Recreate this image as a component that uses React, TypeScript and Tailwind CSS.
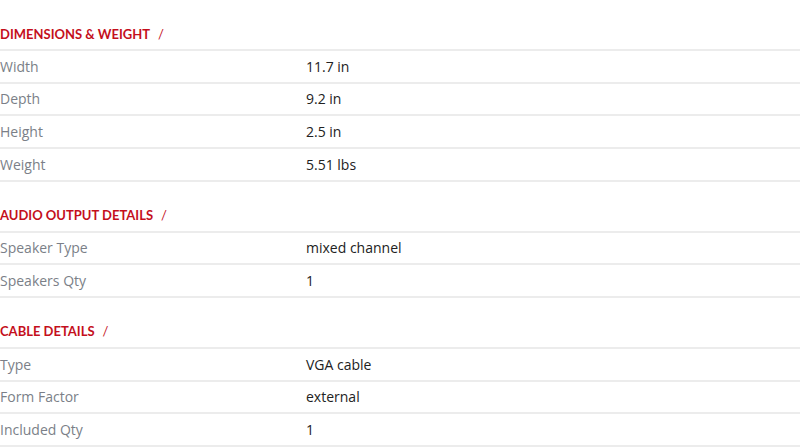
const sections = [
  {
    title: "DIMENSIONS & WEIGHT",
    rows: [
      ["Width", "11.7 in"],
      ["Depth", "9.2 in"],
      ["Height", "2.5 in"],
      ["Weight", "5.51 lbs"],
    ],
  },
  {
    title: "AUDIO OUTPUT DETAILS",
    rows: [
      ["Speaker Type", "mixed channel"],
      ["Speakers Qty", "1"],
    ],
  },
  {
    title: "CABLE DETAILS",
    rows: [
      ["Type", "VGA cable"],
      ["Form Factor", "external"],
      ["Included Qty", "1"],
    ],
  },
];

export default function App() {
  return (
    <div className="w-[800px] h-[448px] overflow-hidden bg-white font-['Open_Sans',sans-serif]">
      {sections.map((s) => (
        <section key={s.title}>
          <div className="flex items-end h-[51px] pb-[5px] border-b-2 border-[#ececec] text-[13px] font-bold text-[#c40f1c] font-['Lato',sans-serif]">
            {s.title}
            <span className="ml-[8px] font-normal">/</span>
          </div>
          {s.rows.map(([label, value]) => (
            <div
              key={label}
              className="flex items-center h-[32.67px] border-b-2 border-[#ececec] text-[14px]"
            >
              <span className="w-[306px] text-[#7b7f88]">{label}</span>
              <span className="text-[#222]">{value}</span>
            </div>
          ))}
        </section>
      ))}
    </div>
  );
}
